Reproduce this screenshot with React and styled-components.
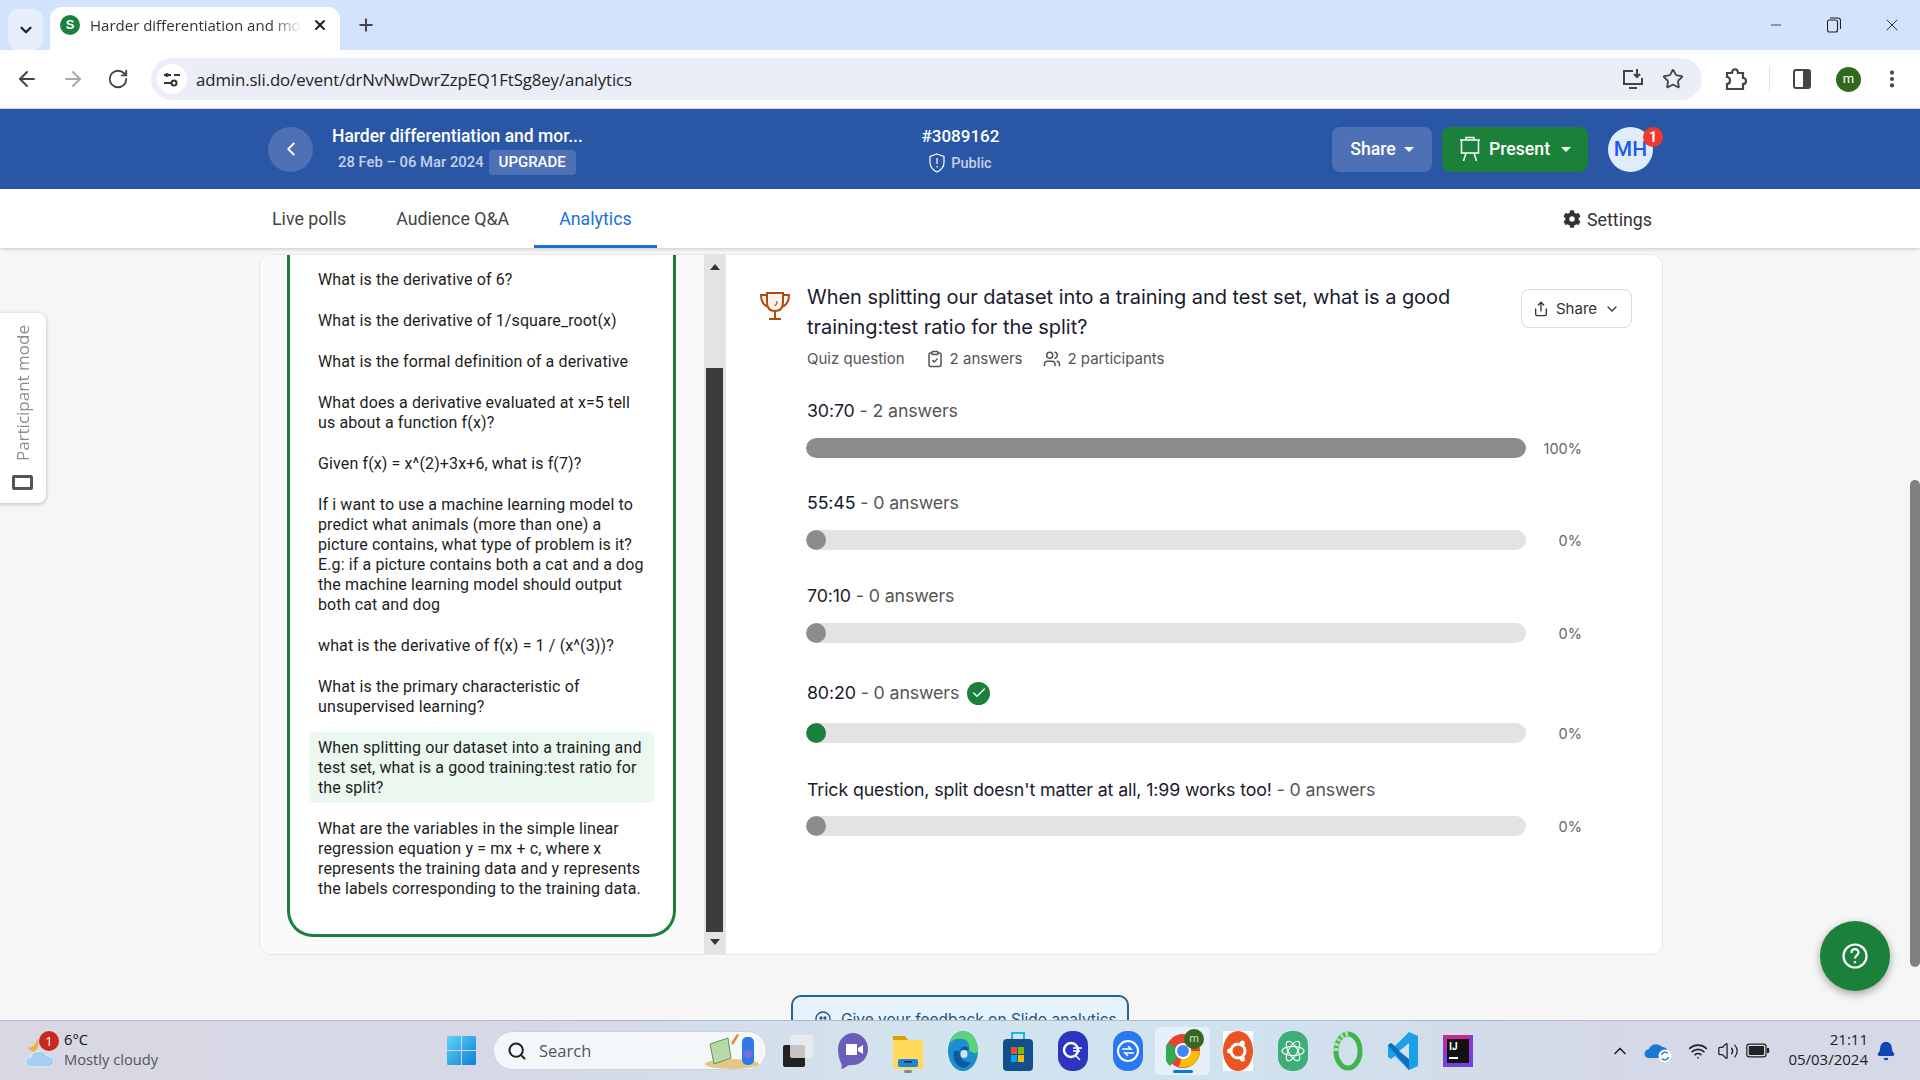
import React from 'react';
import styled, { createGlobalStyle } from 'styled-components';
import { ArrowLeft, ArrowRight, RotateCw, Star, MoreVertical, Minus, X, Plus, ChevronDown, ChevronLeft, ChevronUp, Share, ClipboardCheck, Users, Check, Search, Wifi, Volume2, Bell } from 'lucide-react';
import { FaCog } from 'react-icons/fa';

const Global = createGlobalStyle`
  html, body { margin: 0; padding: 0; overflow: hidden; background: #f6f6f6; }
  * { box-sizing: border-box; }
`;
const Page = styled.div`width:1920px;height:1080px;display:flex;flex-direction:column;overflow:hidden;font-family:Roboto,"Liberation Sans",sans-serif;position:relative;`;

/* browser chrome */
const TabStrip = styled.div`height:50px;background:#d3e3fd;display:flex;align-items:flex-end;padding-left:8px;flex:none;`;
const TabList = styled.div`width:35px;height:41px;align-self:flex-start;margin-top:9px;background:#e8effc;border-radius:10px;display:flex;align-items:center;justify-content:center;color:#222;`;
const Tab = styled.div`width:290px;height:43px;margin-left:7px;background:#fff;border-radius:12px 12px 0 0;display:flex;align-items:center;padding:0 10px 7px;color:#333;font:15px "Open Sans",sans-serif;`;
const Favicon = styled.div`width:20px;height:20px;border-radius:50%;background:#1b803a;color:#fff;font:700 13px/20px "Liberation Sans",sans-serif;text-align:center;flex:none;`;
const TabTitle = styled.div`width:212px;margin-left:10px;white-space:nowrap;overflow:hidden;-webkit-mask-image:linear-gradient(90deg,#000 85%,transparent);mask-image:linear-gradient(90deg,#000 85%,transparent);`;
const TabClose = styled.span`margin-left:10px;display:flex;color:#222;`;
const NewTab = styled.span`margin-left:16px;margin-top:-1px;display:flex;color:#444;align-self:center;`;
const WinControls = styled.div`margin-left:auto;display:flex;align-self:flex-start;margin-top:14px;color:#222;padding-right:17px;gap:36px;`;
const WinBtn = styled.span`width:22px;height:22px;display:flex;align-items:center;justify-content:center;`;
const Toolbar = styled.div`height:59px;background:#fff;display:flex;align-items:center;border-bottom:1px solid #d8d8d8;padding:0 0 0 15px;flex:none;`;
const NavIcon = styled.span`width:${p=>p.$w||46}px;display:flex;color:${p=>p.$dim?'#aaa':'#444'};`;
const Omni = styled.div`width:1551px;height:42px;background:#ebeef8;border-radius:21px;display:flex;align-items:center;padding:0 18px 0 6px;`;
const SiteInfo = styled.span`width:30px;height:30px;border-radius:50%;background:#fff;display:flex;align-items:center;justify-content:center;flex:none;`;
const Url = styled.div`margin-left:9px;font:16.8px "Open Sans",sans-serif;color:#222;letter-spacing:-.1px;`;
const OmniRight = styled.div`margin-left:auto;display:flex;gap:18px;align-items:center;color:#444;`;
const ToolRight = styled.div`display:flex;align-items:center;color:#444;margin-left:23px;`;
const Divider = styled.span`width:1px;height:24px;background:#cfe0f7;margin:0 23px 0 22px;`;
const Profile = styled.span`width:25px;height:25px;border-radius:50%;background:#33691e;color:#fff;font:13px/24px Roboto,sans-serif;text-align:center;margin:0 20px 0 25px;`;

/* header */
const Header = styled.header`height:80px;background:#2a56a6;flex:none;`;
const Inner = styled.div`width:1404px;height:100%;margin:0 auto;padding:0 9px 0 10px;display:grid;grid-template-columns:1fr auto 1fr;align-items:center;color:#fff;`;
const HeadLeft = styled.div`display:flex;align-items:center;gap:20px;`;
const CircleBtn = styled.span`width:45px;height:45px;border-radius:50%;background:#4e71b5;display:flex;align-items:center;justify-content:center;`;
const EventTitle = styled.div`font-size:17.5px;font-weight:500;line-height:24px;margin-left:-1px;`;
const EventMeta = styled.div`display:flex;align-items:center;gap:5px;margin-top:2px;padding-left:5px;font-size:14.8px;font-weight:500;color:#c5d1e8;`;
const Upgrade = styled.span`height:25px;padding:0 10px;border-radius:4px;background:#4e71b5;color:#fff;font-size:15px;line-height:25px;`;
const HeadCenter = styled.div`text-align:center;`;
const Code = styled.div`font-size:17px;font-weight:500;line-height:22px;`;
const Public = styled.div`display:flex;align-items:center;justify-content:center;gap:6px;margin-top:6px;font-size:14.5px;font-weight:500;color:#c5d1e8;`;
const HeadRight = styled.div`display:flex;justify-content:flex-end;align-items:center;`;
const HeadBtn = styled.span`height:45px;width:${p=>p.$w}px;border-radius:8px;background:${p=>p.$bg};margin-right:${p=>p.$mr}px;display:flex;align-items:center;justify-content:center;gap:8px;font-size:17.7px;font-weight:500;color:#fff;`;
const Caret = styled.span`width:0;height:0;border-left:5px solid transparent;border-right:5px solid transparent;border-top:5px solid #fff;margin-left:${p=>p.$ml||0}px;`;
const Avatar = styled.span`width:45px;height:45px;border-radius:50%;background:#e0ebfb;color:#1a5cf0;font-size:21px;font-weight:500;display:flex;align-items:center;justify-content:center;position:relative;`;
const Badge = styled.span`position:absolute;top:0;right:-10px;width:20px;height:20px;border-radius:50%;background:#f0392b;color:#fff;font-size:14px;font-weight:700;text-align:center;line-height:20px;`;

/* nav */
const NavBar = styled.nav`height:59px;background:#fff;flex:none;box-shadow:0 1px 4px rgba(0,0,0,.2);position:relative;z-index:1;`;
const NavInner = styled.div`width:1404px;height:100%;margin:0 auto;padding-right:10px;display:flex;justify-content:space-between;align-items:center;`;
const Tabs = styled.div`display:flex;margin-left:-11px;height:100%;`;
const NavTab = styled.span`padding:3px 25px 0;height:100%;display:flex;align-items:center;font-size:17.8px;font-weight:400;color:${p=>p.$active?'#1a6fe0':'#444'};border-bottom:3px solid ${p=>p.$active?'#1a6fe0':'transparent'};`;
const SettingsLink = styled.span`display:flex;align-items:center;gap:6px;font-size:17.8px;color:#333;padding-top:1px;`;

/* content */
const Main = styled.main`flex:1;min-height:0;overflow:hidden;padding-top:6px;position:relative;`;
const Card = styled.section`width:1404px;height:701px;margin-left:259px;background:#fff;border:1px solid #e6e6e6;border-radius:12px;display:flex;overflow:hidden;`;
const LeftCol = styled.aside`width:466px;background:#fafafa;display:flex;flex:none;padding-left:27px;`;
const QuestionBox = styled.div`width:389px;height:682px;flex:none;background:#fff;border:3px solid #1b803a;border-top:0;border-radius:0 0 26px 26px;padding:9px 19px 0 19px;`;
const QItem = styled.div`font-size:16px;letter-spacing:.12px;line-height:20px;color:#1d1d1d;padding:5.5px 9px;margin:0 0 10px 0;border-radius:5px;background:${p=>p.$on?'#ebf8f0':'transparent'};`;
const ColScroll = styled.div`width:22px;margin-left:28px;flex:none;background:#e3e3e3;display:flex;flex-direction:column;align-items:center;justify-content:space-between;position:relative;`;
const Arrow = styled.span`width:0;height:0;border-left:5px solid transparent;border-right:5px solid transparent;${p=>p.$up?'border-bottom:6px solid #333;margin-top:9px;':'border-top:6px solid #333;margin-bottom:9px;'}`;
const Thumb = styled.span`position:absolute;left:2px;right:3px;top:113px;height:564px;background:#3c3c3c;`;
const RightCol = styled.div`flex:1;padding:27px 25px 0 33px;position:relative;`;
const QHead = styled.div`display:flex;`;
const Trophy = styled.span`width:32px;flex:none;margin-right:16px;margin-top:9px;`;
const QTitle = styled.h2`margin:0;width:680px;font:400 20px/30px Inter,sans-serif;letter-spacing:-.05px;color:#1a1a2e;`;
const ShareBtn = styled.span`position:absolute;top:34px;right:30px;width:111px;height:39px;border:1px solid #dcdcdc;border-radius:8px;display:flex;align-items:center;justify-content:center;gap:7px;font:15px Inter,sans-serif;color:#333;`;
const Meta = styled.div`display:flex;align-items:center;gap:21px;margin:7px 0 0 48px;font:15px Inter,sans-serif;color:#555;`;
const MetaItem = styled.span`display:flex;align-items:center;gap:6px;`;
const Options = styled.div`margin:31px 0 0 47px;`;
const Option = styled.div`padding-bottom:${p=>p.$pb}px;`;
const OptLabel = styled.div`display:flex;align-items:center;gap:8px;height:24px;padding-left:1px;font:400 17.8px/24px Inter,sans-serif;color:#1a1a2e;letter-spacing:-.13px;margin-bottom:${p=>p.$mb}px;`;
const OptSub = styled.span`color:#555;`;
const BarRow = styled.div`display:flex;align-items:center;`;
const Track = styled.div`width:720px;height:20px;background:#e3e3e3;border-radius:10px;overflow:hidden;`;
const Fill = styled.div`height:100%;min-width:20px;border-radius:10px;background:${p=>p.$c};`;
const Pct = styled.span`width:56px;text-align:right;font:14.5px Inter,sans-serif;color:#666;`;
const CheckDot = styled.span`width:23px;height:23px;border-radius:50%;background:#1b803a;color:#fff;display:flex;align-items:center;justify-content:center;`;
const Feedback = styled.div`width:338px;height:60px;margin:40px auto 0;padding:13px 0 0 20px;background:#e6f3fc;border:2px solid #2a6496;border-radius:10px;display:flex;align-items:flex-start;gap:8px;font:15.5px Inter,sans-serif;color:#24537f;`;
const ParticipantTab = styled.div`position:absolute;left:0;top:65px;width:46px;height:190px;background:#fff;border-radius:0 8px 8px 0;box-shadow:0 1px 4px rgba(0,0,0,.25);display:flex;flex-direction:column-reverse;align-items:center;padding:13px 0;gap:14px;`;
const ParticipantText = styled.span`writing-mode:vertical-rl;transform:rotate(180deg);white-space:nowrap;font:17px "Open Sans",sans-serif;color:#8c8c8c;margin-right:2px;`;
const ParticipantBox = styled.span`width:21px;height:15px;flex:none;border:3px solid #555;border-radius:2px;margin-right:1px;`;
const PageThumb = styled.span`position:absolute;right:0;top:232px;width:10px;height:487px;background:#7f7f7f;border-radius:5px;`;
const Fab = styled.span`position:absolute;left:1820px;top:673px;width:70px;height:70px;border-radius:50%;background:#1b803a;box-shadow:0 3px 8px rgba(0,0,0,.35);display:flex;align-items:center;justify-content:center;`;

/* taskbar */
const Taskbar = styled.footer`height:60px;flex:none;border-top:1px solid #b6bac6;background:linear-gradient(90deg,#d8d8e4 0%,#d6d8e5 25%,#d2e4ef 50%,#d0e2ee 65%,#d5d8e6 85%,#d5d8e6 100%);display:flex;align-items:center;position:relative;z-index:2;padding-left:25px;`;
const Weather = styled.div`width:422px;display:flex;align-items:center;gap:9px;`;
const WeatherIcon = styled.span`width:30px;height:34px;position:relative;`;
const WeatherBadge = styled.span`position:absolute;top:-3px;left:14px;width:20px;height:20px;border-radius:50%;background:#c8291e;color:#fff;font:13px/20px "Open Sans",sans-serif;text-align:center;`;
const WeatherText = styled.div`font:14.7px/20px "Open Sans",sans-serif;color:#555;margin-top:-3px;`;
const WeatherTemp = styled.div`color:#111;`;
const WinLogo = styled.span`width:29px;display:flex;flex:none;`;
const SearchBox = styled.div`width:274px;height:39px;margin-left:17px;margin-right:3px;border-radius:20px;background:#f4f7fa;border:1px solid #ccd3dc;display:flex;align-items:center;padding:0 6px 0 13px;gap:12px;font:16.5px "Open Sans",sans-serif;color:#555;flex:none;`;
const SearchArt = styled.span`margin-left:auto;display:flex;`;
const Slot = styled.span`width:55px;height:48px;display:flex;align-items:center;justify-content:center;flex:none;position:relative;border-radius:5px;background:${p=>p.$active?'#e5f0f8':'transparent'};`;
const Indicator = styled.span`position:absolute;bottom:2px;left:50%;margin-left:${p=>p.$w/-2}px;width:${p=>p.$w}px;height:3px;border-radius:2px;background:${p=>p.$c};`;
const Mini = styled.span`position:absolute;top:2px;right:6px;width:20px;height:20px;border-radius:50%;background:#33691e;color:#ddd;font:11px/19px Roboto,sans-serif;text-align:center;`;
const Tray = styled.div`margin-left:auto;display:flex;align-items:center;color:#222;padding-right:24px;`;
const TrayIcon = styled.span`width:${p=>p.$w}px;display:flex;justify-content:center;`;
const Clock = styled.div`margin-left:13px;margin-top:-3px;font:15px/20px "Open Sans",sans-serif;color:#222;text-align:right;width:82px;`;
const BellWrap = styled.span`margin-left:8px;display:flex;color:#0f46b8;`;

const questions = [
  'What is the derivative of 6?','What is the derivative of 1/square_root(x)','What is the formal definition of a derivative',
  'What does a derivative evaluated at x=5 tell us about a function f(x)?','Given f(x) = x^(2)+3x+6, what is f(7)?',
  'If i want to use a machine learning model to predict what animals (more than one) a picture contains, what type of problem is it? E.g: if a picture contains both a cat and a dog the machine learning model should output both cat and dog',
  'what is the derivative of f(x) = 1 / (x^(3))?','What is the primary characteristic of unsupervised learning?',
  'When splitting our dataset into a training and test set, what is a good training:test ratio for the split?',
  'What are the variables in the simple linear regression equation y = mx + c, where x represents the training data and y represents the labels corresponding to the training data.',
];
const options = [
  {l:'30:70',s:'2 answers',w:100,p:'100%',c:'#8c8c8c',pb:33,mb:15},
  {l:'55:45',s:'0 answers',w:0,p:'0%',c:'#8c8c8c',pb:34,mb:15},
  {l:'70:10',s:'0 answers',w:0,p:'0%',c:'#8c8c8c',pb:38,mb:15},
  {l:'80:20',s:'0 answers',w:0,p:'0%',c:'#1b803a',pb:35,mb:18,ok:true},
  {l:"Trick question, split doesn't matter at all, 1:99 works too!",s:'0 answers',w:0,p:'0%',c:'#8c8c8c',pb:0,mb:14},
];

const TrophyIcon = () => (
  <svg width="32" height="30" viewBox="0 0 32 30" fill="none" stroke="#b5490a" strokeWidth="2">
    <path d="M8 2h16v9c0 6-3 9-8 9s-8-3-8-9z" fill="#fdf4ee"/>
    <path d="M8 4H2c0 6 2 10 7 12M24 4h6c0 6-2 10-7 12M16 20v7M10 28h12"/>
    <path d="M18 10c0 3-.5 4-2.500 4.500" strokeWidth="1.200"/>
  </svg>
);
const Easel = () => (
  <svg width="22" height="26" viewBox="0 0 22 26" fill="none" stroke="#fff" strokeWidth="1.500">
    <path d="M7 4V1.500h8V4M1 4h20M2.500 4v13h17V4M7 17l-2.500 8M15 17l2.500 8"/>
  </svg>
);
const Sliders = () => (
  <svg width="18" height="18" viewBox="0 0 18 18" fill="none" stroke="#333" strokeWidth="2">
    <path d="M1 5h7M1 13h7M11 5h6" /><circle cx="11" cy="13" r="2.500"/><circle cx="4" cy="5" r="2" fill="#333" stroke="none" />
  </svg>
);
const Install = () => (
  <svg width="22" height="22" viewBox="0 0 22 22" fill="none" stroke="#444" strokeWidth="2">
    <path d="M11 3H2v13h18v-6M7 20h8M15 1v8M12 6l3 3 3-3"/>
  </svg>
);
const Puzzle = () => (
  <svg width="22" height="24" viewBox="0 0 22 24" fill="none" stroke="#444" strokeWidth="2.200">
    <path d="M2 6h5c0-5 6-5 6 0h5v5c4 0 4 6 0 6v5H2v-5c4 0 4-7 0-7z"/>
  </svg>
);
const SidePanel = () => (
  <svg width="18" height="20" viewBox="0 0 18 20"><rect x="1" y="1" width="16" height="18" rx="2" fill="none" stroke="#444" strokeWidth="2"/><rect x="10" y="1" width="7" height="18" fill="#444"/></svg>
);
const Restore = () => (
  <svg width="14" height="16" viewBox="0 0 14 16" fill="none" stroke="#222" strokeWidth="1.100"><rect x=".5" y="3" width="10" height="12" rx="2"/><path d="M3 1h8c1.500 0 2.500 1 2.500 2.500V12"/></svg>
);
const ShieldIcon = () => (
  <svg width="16" height="20" viewBox="0 0 16 20" fill="none" stroke="#fff" strokeWidth="1.200"><path d="M8 1l7 2.500v6c0 4.500-3 7.500-7 9.500-4-2-7-5-7-9.500v-6z"/><path d="M8 5v6M8 13v1.500"/></svg>
);
const Help = () => (
  <svg width="26" height="26" viewBox="0 0 26 26" fill="none" stroke="#fff" strokeWidth="2.200"><circle cx="13" cy="13" r="11.500"/><path d="M9.500 10c0-5 7-5 7-.5 0 2.800-3.500 2.800-3.500 6M13 18v2.200"/></svg>
);
const Cloud = () => (
  <svg width="30" height="34" viewBox="0 0 30 34"><path d="M2 14c6 0 10-4 10-10 3 5 1 13-4 14z" fill="#f0b040"/><path d="M7 33c-8 0-8-10-1-10 1-7 13-8 16-1 9 0 9 11 0 11z" fill="#a9cdf0" stroke="#e4f0fb"/></svg>
);
const Win11 = () => (
  <svg width="29" height="29" viewBox="0 0 29 29"><defs><linearGradient id="w" x1="0" y1="0" x2="1" y2="1"><stop offset="0" stopColor="#5ed3f5"/><stop offset="1" stopColor="#0f7fd8"/></linearGradient></defs><path d="M0 1.500A1.500 1.500 0 0 1 1.500 0H14v14H0zM15 0h12.500A1.500 1.500 0 0 1 29 1.500V14H15zM0 15h14v14H1.500A1.500 1.500 0 0 1 0 27.500zM15 15h14v12.500a1.500 1.500 0 0 1-1.500 1.500H15z" fill="url(#w)"/></svg>
);
const Art = () => (
  <svg width="56" height="38" viewBox="0 0 56 38"><ellipse cx="28" cy="32" rx="27" ry="5" fill="#e7c48a"/><path d="M6 12l18-6 3 20-17 6z" fill="#b8d8a8" stroke="#5a9a5a"/><path d="M27 11l6-9 2 1-6 10z" fill="#e88a30"/><rect x="38" y="5" width="12" height="28" rx="5" fill="#2f7ae5"/><circle cx="44" cy="22" r="4" fill="#7b6ae0"/></svg>
);
const TaskView = () => (
  <svg width="30" height="34" viewBox="0 0 30 34"><rect x="0" y="11" width="22" height="22" rx="2" fill="#222"/><rect x="7" y="1" width="23" height="23" rx="2" fill="#eee" fillOpacity=".8"/></svg>
);
const Meet = () => (
  <svg width="30" height="38" viewBox="0 0 30 38"><path d="M15 1c8 0 15 7 15 16s-7 16-15 16c-3 0-5 0-7 2-2 1-4 2-5 2 1-2 1-4 0-6-2-4-3-9-3-14C0 8 7 1 15 1z" fill="#6a5fb8"/><path d="M8 12h11v11H8zM20 16l5-3v9l-5-3z" fill="#fff"/></svg>
);
const Folder = () => (
  <svg width="30" height="36" viewBox="0 0 30 36"><path d="M0 3h12l3 4h15v4H0z" fill="#d9a400"/><rect y="7" width="30" height="29" fill="#ffd85c"/><rect x="5" y="26" width="20" height="8" rx="2" fill="#1a86d8"/><rect x="11" y="28" width="8" height="1.500" fill="#123"/></svg>
);
const Edge = () => (
  <svg width="30" height="40" viewBox="0 0 30 40"><ellipse cx="15" cy="20" rx="15" ry="20" fill="#1c8fd0"/><path d="M30 20C30 8 23 0 15 0 8 0 3 6 2 12c3-4 8-5 13-4 5 1 7 6 6 11 4 4 9 4 9 1z" fill="#5ed27a"/><path d="M21 19c-1-5-8-5-9 1-1 7 4 12 11 11-3 5-7 7-10 5-5-1-9-9-7-16" fill="#0c5aa0"/><ellipse cx="16" cy="23" rx="3.500" ry="4" fill="#d0e2ee"/></svg>
);
const StoreIcon = () => (
  <svg width="30" height="40" viewBox="0 0 30 40"><path d="M9 8V2h12v6" fill="none" stroke="#1cb4e8" strokeWidth="2"/><rect y="8" width="30" height="32" rx="4" fill="#11508a"/><rect x="8" y="16" width="6" height="7" fill="#f25022"/><rect x="15" y="16" width="6" height="7" fill="#7fba00"/><rect x="8" y="24" width="6" height="7" fill="#00a4ef"/><rect x="15" y="24" width="6" height="7" fill="#ffb900"/></svg>
);
const Squircle = ({c,children}) => (
  <svg width="30" height="40" viewBox="0 0 30 40" fill="none"><rect width="30" height="40" rx="14" fill={c}/>{children}</svg>
);
const Ubuntu = () => (
  <svg width="30" height="40" viewBox="0 0 30 40"><rect width="30" height="40" fill="#fff"/><ellipse cx="15" cy="20" rx="15" ry="20" fill="#e95420"/><circle cx="15" cy="20" r="7" fill="none" stroke="#fff" strokeWidth="3"/><circle cx="6.500" cy="20" r="2.500" fill="#fff"/><circle cx="19.500" cy="12" r="2.500" fill="#fff"/><circle cx="19.500" cy="28" r="2.500" fill="#fff"/></svg>
);
const Atom = () => (
  <svg width="30" height="40" viewBox="0 0 30 40" fill="none"><rect width="30" height="40" rx="14" fill="#3fad7a"/><g stroke="#fff" strokeWidth="1.100"><ellipse cx="15" cy="20" rx="11" ry="4.500" transform="rotate(60 15 20)"/><ellipse cx="15" cy="20" rx="11" ry="4.500" transform="rotate(120 15 20)"/><ellipse cx="15" cy="20" rx="11" ry="4.500"/></g></svg>
);
const Ring = () => (
  <svg width="30" height="40" viewBox="0 0 30 40" fill="none"><ellipse cx="15" cy="20" rx="12" ry="17" stroke="#3cb54a" strokeWidth="5"/><path d="M3 20c0-9 5-17 12-17" stroke="#a8e0a8" strokeWidth="5" strokeDasharray="3 2"/></svg>
);
const VsCode = () => (
  <svg width="30" height="40" viewBox="0 0 30 40"><path d="M21 1l9 4v30l-9 4L7 25l-4 3-3-2v-12l3-2 4 3z" fill="#1a9fe8"/><path d="M21 12L11 20l10 8zM0 14l3-2 18 16v11z" fill="#0f6fb8"/><path d="M21 12L11 20l10 8z" fill="#d0e2ee"/></svg>
);
const Idea = () => (
  <svg width="30" height="32" viewBox="0 0 30 32"><rect width="30" height="32" fill="#7a3fe0"/><rect x="1" width="26" height="16" fill="#e2246e" opacity=".7"/><rect x="4" y="4" width="22" height="24" fill="#111"/><text x="6" y="15" fontSize="10" fontWeight="700" fill="#fff" fontFamily="Roboto">IJ</text><rect x="6" y="22" width="9" height="2" fill="#fff"/></svg>
);
const OneDrive = () => (
  <svg width="30" height="24" viewBox="0 0 30 24"><path d="M5 19c-6 0-6-8 0-9 2-6 10-6 13-2 6 0 7 6 4 11z" fill="#1a78d0"/><circle cx="21" cy="17" r="6.500" fill="#fff"/><path d="M17.500 16a3.700 3.700 0 0 1 6.500-1.500M24.500 18a3.700 3.700 0 0 1-6.500 1.500" fill="none" stroke="#1a78d0" strokeWidth="1.400"/></svg>
);
const Batt = () => (
  <svg width="24" height="15" viewBox="0 0 30 18"><rect x="1" y="1" width="24" height="16" rx="3" fill="none" stroke="#222" strokeWidth="1.500"/><rect x="3.500" y="3.500" width="19" height="11" rx="1" fill="#222"/><rect x="26" y="6" width="3" height="6" rx="1" fill="#222"/></svg>
);

export default function App() {
  return (
    <Page>
      <Global />
      <TabStrip>
        <TabList><ChevronDown size={18} strokeWidth={3} /></TabList>
        <Tab>
          <Favicon>S</Favicon>
          <TabTitle>Harder differentiation and more</TabTitle>
          <TabClose><X size={16} strokeWidth={3} /></TabClose>
        </Tab>
        <NewTab><Plus size={20} strokeWidth={2.4} /></NewTab>
        <WinControls>
          <WinBtn><Minus size={16} strokeWidth={1.2} /></WinBtn>
          <WinBtn><Restore /></WinBtn>
          <WinBtn><X size={20} strokeWidth={1.1} /></WinBtn>
        </WinControls>
      </TabStrip>
      <Toolbar>
        <NavIcon><ArrowLeft size={24} /></NavIcon>
        <NavIcon $dim><ArrowRight size={24} /></NavIcon>
        <NavIcon $w={44}><RotateCw size={22} /></NavIcon>
        <Omni>
          <SiteInfo><Sliders /></SiteInfo>
          <Url>admin.sli.do/event/drNvNwDwrZzpEQ1FtSg8ey/analytics</Url>
          <OmniRight><Install /><Star size={22} strokeWidth={2} /></OmniRight>
        </Omni>
        <ToolRight>
          <Puzzle />
          <Divider />
          <SidePanel />
          <Profile>m</Profile>
          <MoreVertical size={22} strokeWidth={2.6} />
        </ToolRight>
      </Toolbar>
      <Header>
        <Inner>
          <HeadLeft>
            <CircleBtn><ChevronLeft size={22} color="#fff" /></CircleBtn>
            <div>
              <EventTitle>Harder differentiation and mor...</EventTitle>
              <EventMeta>28 Feb – 06 Mar 2024<Upgrade>UPGRADE</Upgrade></EventMeta>
            </div>
          </HeadLeft>
          <HeadCenter>
            <Code>#3089162</Code>
            <Public><ShieldIcon />Public</Public>
          </HeadCenter>
          <HeadRight>
            <HeadBtn $w={100} $bg="#4e71b5" $mr={10}>Share<Caret /></HeadBtn>
            <HeadBtn $w={146} $bg="#1b803a" $mr={20}><Easel />Present<Caret $ml={3} /></HeadBtn>
            <Avatar>MH<Badge>1</Badge></Avatar>
          </HeadRight>
        </Inner>
      </Header>
      <NavBar>
        <NavInner>
          <Tabs>
            <NavTab>Live polls</NavTab>
            <NavTab>Audience Q&amp;A</NavTab>
            <NavTab $active>Analytics</NavTab>
          </Tabs>
          <SettingsLink><FaCog size={18} />Settings</SettingsLink>
        </NavInner>
      </NavBar>
      <Main>
        <Card>
          <LeftCol>
            <QuestionBox>
              {questions.map((q, i) => <QItem key={i} $on={i === 8}>{q}</QItem>)}
            </QuestionBox>
            <ColScroll><Arrow $up /><Thumb /><Arrow /></ColScroll>
          </LeftCol>
          <RightCol>
            <QHead>
              <Trophy><TrophyIcon /></Trophy>
              <QTitle>When splitting our dataset into a training and test set, what is a good training:test ratio for the split?</QTitle>
            </QHead>
            <ShareBtn><Share size={16} />Share<ChevronDown size={16} /></ShareBtn>
            <Meta>
              <MetaItem>Quiz question</MetaItem>
              <MetaItem><ClipboardCheck size={18} />2 answers</MetaItem>
              <MetaItem><Users size={18} />2 participants</MetaItem>
            </Meta>
            <Options>
              {options.map((o, i) => (
                <Option key={i} $pb={o.pb}>
                  <OptLabel $mb={o.mb}>
                    <span>{o.l} <OptSub>- {o.s}</OptSub></span>
                    {o.ok && <CheckDot><Check size={16} strokeWidth={2} /></CheckDot>}
                  </OptLabel>
                  <BarRow>
                    <Track><Fill $c={o.c} style={{ width: `${o.w}%` }} /></Track>
                    <Pct>{o.p}</Pct>
                  </BarRow>
                </Option>
              ))}
            </Options>
          </RightCol>
        </Card>
        <Feedback>
          <svg width="20" height="22" viewBox="0 0 20 22" fill="none" stroke="#24537f" strokeWidth="1.300"><path d="M3 19V9a7 7 0 0 1 14 0v5l2 2"/><circle cx="8" cy="8" r="1"/><circle cx="12" cy="8" r="1"/></svg>
          Give your feedback on Slido analytics
        </Feedback>
        <ParticipantTab>
          <ParticipantBox />
          <ParticipantText>Participant mode</ParticipantText>
        </ParticipantTab>
        <PageThumb />
        <Fab><Help /></Fab>
      </Main>
      <Taskbar>
        <Weather>
          <WeatherIcon><Cloud /><WeatherBadge>1</WeatherBadge></WeatherIcon>
          <WeatherText><WeatherTemp>6°C</WeatherTemp>Mostly cloudy</WeatherText>
        </Weather>
        <WinLogo><Win11 /></WinLogo>
        <SearchBox><Search size={20} color="#222" strokeWidth={2.4} />Search<SearchArt><Art /></SearchArt></SearchBox>
        <Slot><TaskView /></Slot>
        <Slot><Meet /></Slot>
        <Slot><Folder /><Indicator $w={8} $c="#888" /></Slot>
        <Slot><Edge /></Slot>
        <Slot><StoreIcon /></Slot>
        <Slot><Squircle c="#2b35c0"><circle cx="13" cy="19" r="7" stroke="#fff" strokeWidth="2.500"/><path d="M18 25l4 4M15 17h9M15 20h7" stroke="#fff" strokeWidth="1.500"/></Squircle></Slot>
        <Slot><Squircle c="#2a78f0"><circle cx="15" cy="20" r="10" stroke="#fff" strokeWidth="2"/><path d="M9 18h9l-3-3M21 22h-9l3 3" stroke="#fff" strokeWidth="1.600"/></Squircle></Slot>
        <Slot $active>
          <svg width="34" height="34" viewBox="0 0 34 34"><circle cx="17" cy="17" r="17" fill="#e94235"/><path d="M17 17L4 32A17 17 0 0 1 2 9z" fill="#34a853"/><path d="M17 17h17a17 17 0 0 1-21 16z" fill="#fbbc04"/><circle cx="17" cy="17" r="8" fill="#fff"/><circle cx="17" cy="17" r="6" fill="#4285f4"/></svg>
          <Mini>m</Mini>
          <Indicator $w={20} $c="#0a78d8" />
        </Slot>
        <Slot><Ubuntu /></Slot>
        <Slot><Atom /></Slot>
        <Slot><Ring /></Slot>
        <Slot><VsCode /></Slot>
        <Slot><Idea /></Slot>
        <Tray>
          <TrayIcon $w={30}><ChevronUp size={20} strokeWidth={2} /></TrayIcon>
          <TrayIcon $w={48}><OneDrive /></TrayIcon>
          <TrayIcon $w={30}><Wifi size={20} /></TrayIcon>
          <TrayIcon $w={30}><Volume2 size={22} strokeWidth={1.400} /></TrayIcon>
          <TrayIcon $w={30}><Batt /></TrayIcon>
          <Clock>21:11<br />05/03/2024</Clock>
          <BellWrap><Bell size={20} fill="#0f46b8" /></BellWrap>
        </Tray>
      </Taskbar>
    </Page>
  );
}
